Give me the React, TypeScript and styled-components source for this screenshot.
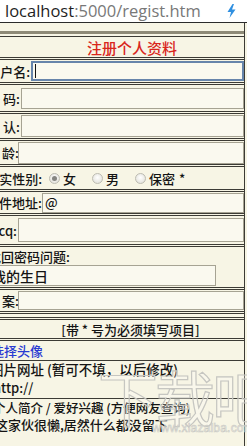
import React from "react";
import styled, { createGlobalStyle } from "styled-components";

const GlobalStyle = createGlobalStyle`
  html, body {
    margin: 0;
    padding: 0;
  }
  body {
    width: 247px;
    height: 446px;
    overflow: hidden;
    background: #f7f5e5;
    font-family: "Noto Sans CJK SC", "Noto Sans", sans-serif;
  }
`;

const Root = styled.div`
  position: relative;
  width: 247px;
  height: 446px;
  overflow: hidden;
  background: #f7f5e5;
`;

const AddressBar = styled.div`
  height: 22px;
  background: #ffffff;
  border-bottom: 1px solid #2b2b2b;
  display: flex;
  align-items: center;
  justify-content: space-between;
  padding: 0 11px 0 5px;
  font-family: "Open Sans", "Noto Sans", sans-serif;
  font-size: 16.5px;
  line-height: 22px;
`;

const Host = styled.span`
  color: #1f1f1f;
`;

const Path = styled.span`
  color: #787878;
`;

const Sheet = styled.div`
  width: 259px;
  margin-left: -14px;
  box-sizing: border-box;
  border-right: 1px solid #3c3b35;
`;

const Spacer = styled.div`
  height: 8px;
  border-bottom: 3px solid #8e8a77;
  margin-bottom: 2px;
`;

const Row = styled.div<{ $h: number; $top?: boolean }>`
  height: ${(p) => p.$h}px;
  display: flex;
  align-items: center;
  border-top: ${(p) => (p.$top ? "1px solid #3c3b35" : "none")};
  border-bottom: 3px double #3c3b35;
  font-size: 13px;
  font-weight: 500;
  color: #141414;
`;

const Centered = styled.div<{ $pad: number; $color?: string; $size?: number }>`
  flex: 1;
  text-align: center;
  padding-left: ${(p) => p.$pad}px;
  color: ${(p) => p.$color || "#141414"};
  font-size: ${(p) => p.$size || 13}px;
  white-space: nowrap;
`;

const Label = styled.div<{ $w: number }>`
  width: ${(p) => p.$w}px;
  flex: none;
  text-align: right;
  white-space: nowrap;
  padding-right: 1px;
  box-sizing: border-box;
`;

const Field = styled.div<{ $h: number; $focus?: boolean }>`
  flex: 1;
  height: ${(p) => p.$h}px;
  box-sizing: border-box;
  background: #faf9ef;
  border: ${(p) => (p.$focus ? "2px solid #6785ab" : "1px solid #a6a393")};
  display: flex;
  align-items: center;
  padding-left: 2px;
  font-size: 13px;
  color: #141414;
  white-space: nowrap;
`;

const Caret = styled.span`
  width: 1px;
  height: 14px;
  background: #111;
`;

const Options = styled.div`
  display: flex;
  align-items: center;
  padding-left: 6px;
`;

const Option = styled.label`
  display: flex;
  align-items: center;
  margin-right: 16px;
`;

const Radio = styled.span<{ $on?: boolean }>`
  width: 11px;
  height: 11px;
  box-sizing: border-box;
  border-radius: 50%;
  border: 1px solid #bdbcb2;
  background: radial-gradient(circle at 50% 40%, #ffffff 0%, #dcdbd3 100%);
  margin-right: 3px;
  display: flex;
  align-items: center;
  justify-content: center;
  &::after {
    content: "";
    width: 5px;
    height: 5px;
    border-radius: 50%;
    background: ${(p) => (p.$on ? "#858581" : "transparent")};
  }
`;

const Star = styled.span`
  margin-left: -12px;
`;

const Stack = styled.div<{ $h: number }>`
  height: ${(p) => p.$h}px;
  border-bottom: 3px double #3c3b35;
  display: flex;
  flex-direction: column;
  font-size: 13px;
  font-weight: 500;
  color: #141414;
`;

const StackLabel = styled.div`
  padding: 2px 0 0 2px;
  height: 16px;
  line-height: 16px;
  white-space: nowrap;
`;

const WideField = styled.div`
  width: 230px;
  height: 21px;
  box-sizing: border-box;
  border: 1px solid #a6a393;
  background: #faf9ef;
  display: flex;
  align-items: center;
  padding-left: 5px;
  font-size: 14px;
`;

const Cell = styled.div<{ $h: number; $last?: boolean }>`
  height: ${(p) => p.$h}px;
  border-bottom: ${(p) => (p.$last ? "none" : "1px solid #3c3b35")};
  display: flex;
  flex-direction: column;
  font-size: 13px;
  font-weight: 500;
  color: #141414;
`;

const Line = styled.div<{ $pad: number; $color?: string; $h?: number; $size?: number }>`
  height: ${(p) => p.$h || 17}px;
  line-height: ${(p) => p.$h || 17}px;
  padding-left: ${(p) => p.$pad}px;
  color: ${(p) => p.$color || "#141414"};
  font-size: ${(p) => p.$size || 13}px;
  white-space: nowrap;
`;

const Watermark = styled.div`
  position: absolute;
  left: 98px;
  top: 364px;
  font-size: 60px;
  line-height: 64px;
  letter-spacing: -3px;
  color: rgba(255, 255, 255, 0.25);
  -webkit-text-stroke: 1.2px #c6c6c1;
  white-space: nowrap;
  pointer-events: none;
`;

const WatermarkUrl = styled.div`
  position: absolute;
  left: 152px;
  top: 421px;
  font-family: "Liberation Sans", sans-serif;
  font-size: 12px;
  color: rgba(255, 255, 255, 0.3);
  -webkit-text-stroke: 0.6px #c9c9c4;
  letter-spacing: 0.2px;
  pointer-events: none;
`;

const Bolt = () => (
  <svg width="9" height="14" viewBox="0 0 9 14">
    <polygon points="5.5,0 0.5,8 4,8 2.5,14 8.5,5.5 5,5.5 7,0" fill="#2f8fe0" />
  </svg>
);

const fields = [
  { label: "密 码:", w: 35, h: 26, fh: 21 },
  { label: "确 认:", w: 35, h: 24, fh: 22 },
  { label: "年 龄:", w: 32, h: 23, fh: 22 },
];

const App = () => {
  return (
    <Root>
      <GlobalStyle />
      <AddressBar>
        <span>
          <Host>localhost</Host>
          <Path>:5000/regist.htm</Path>
        </span>
        <Bolt />
      </AddressBar>
      <Sheet>
        <Spacer />
        <Row $h={20} $top>
          <Centered $pad={34} $color="#d9261c" $size={15}>
            注册个人资料
          </Centered>
        </Row>
        <Row $h={22}>
          <Label $w={45}>用户名:</Label>
          <Field $h={20} $focus>
            <Caret />
          </Field>
        </Row>
        {fields.map((f) => (
          <Row $h={f.h} key={f.label}>
            <Label $w={f.w}>{f.label}</Label>
            <Field $h={f.fh} />
          </Row>
        ))}
        <Row $h={22}>
          <Label $w={57}>真实性别:</Label>
          <Options>
            <Option>
              <Radio $on />女
            </Option>
            <Option>
              <Radio />男
            </Option>
            <Option>
              <Radio />保密
            </Option>
            <Star>*</Star>
          </Options>
        </Row>
        <Row $h={21}>
          <Label $w={56}>邮件地址:</Label>
          <Field $h={20}>@</Field>
        </Row>
        <Row $h={28}>
          <Label $w={32}>oicq:</Label>
          <Field $h={24} />
        </Row>
        <Stack $h={40}>
          <StackLabel>找回密码问题:</StackLabel>
          <WideField>我的生日</WideField>
        </Stack>
        <Row $h={21}>
          <Label $w={32}>答 案:</Label>
          <Field $h={19} />
        </Row>
        <Row $h={3} />
        <Row $h={18}>
          <Centered $pad={31}>[带 * 号为必须填写项目]</Centered>
        </Row>
        <Cell $h={19}>
          <Line $pad={5} $color="#2b3bd2" $h={19}>
            选择头像
          </Line>
        </Cell>
        <Cell $h={37}>
          <Line $pad={4} $size={13.5}>图片网址 (暂可不填，以后修改)</Line>
          <Line $pad={7} $h={20}>
            http://
          </Line>
        </Cell>
        <Cell $h={50} $last>
          <Line $pad={7} $size={12.5}>个人简介 / 爱好兴趣 (方便网友查询)</Line>
          <Line $pad={9}>这家伙很懒,居然什么都没留下</Line>
        </Cell>
      </Sheet>
      <Watermark>下载吧</Watermark>
      <WatermarkUrl>www.xiazaiba.com</WatermarkUrl>
    </Root>
  );
};

export default App;
